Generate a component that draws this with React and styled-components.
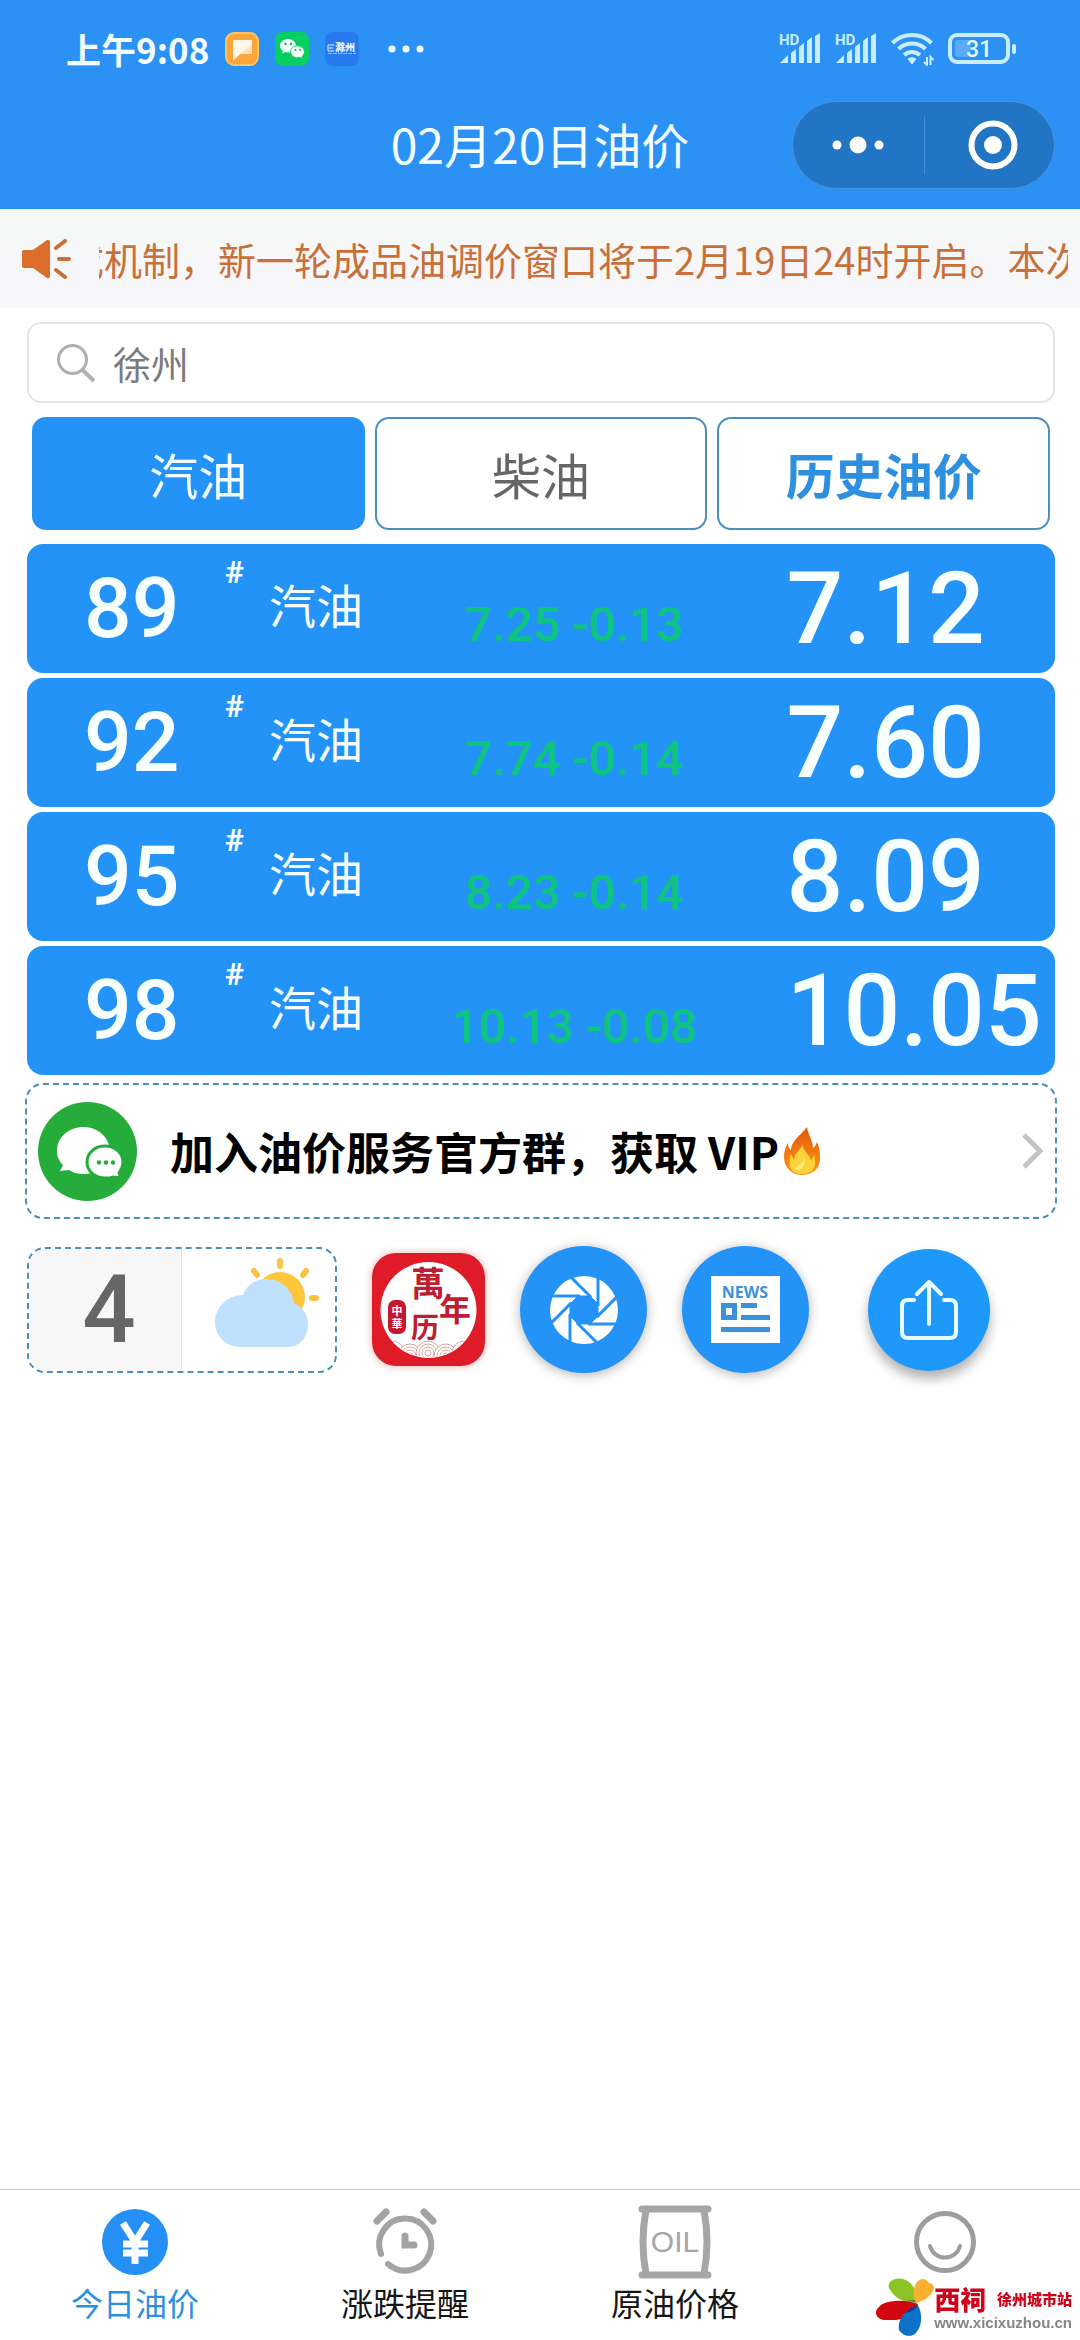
import React from "react";
import styled, { createGlobalStyle } from "styled-components";

const GlobalStyle = createGlobalStyle`
  * {
    box-sizing: border-box;
  }
  body {
    margin: 0;
    background: #fff;
    font-family: "Noto Sans CJK SC", "Noto Sans", sans-serif;
  }
  button, input {
    font-family: inherit;
  }
  a {
    color: inherit;
    text-decoration: none;
  }
  svg {
    display: block;
    flex-shrink: 0;
  }
`;

const blue = "#2393f8";
const digits = `Roboto, "Liberation Sans", sans-serif`;

const Page = styled.div`
  min-height: 100vh;
  display: flex;
  flex-direction: column;
`;

const Header = styled.header`
  background: #2b91f5;
  color: #f4ffff;
  padding-bottom: 17px;
`;

const StatusBar = styled.div`
  height: 98px;
  padding: 0 64px 0 66px;
  display: flex;
  align-items: center;
  justify-content: space-between;
`;

const StatusGroup = styled.div`
  display: flex;
  align-items: center;
  gap: ${({ $gap }) => $gap}px;
`;

const Clock = styled.span`
  font-size: 35px;
  line-height: 40px;
  font-weight: 700;
`;

const TitleBar = styled.div`
  height: 94px;
  padding: 0 25px;
  display: grid;
  grid-template-columns: 1fr auto 1fr;
  align-items: center;
`;

const Title = styled.h1`
  grid-column: 2;
  margin: 0;
  padding-bottom: 4px;
  font-size: 48px;
  line-height: 64px;
  font-weight: 400;
`;

const Capsule = styled.div`
  justify-self: end;
  width: 263px;
  height: 88px;
  display: grid;
  grid-template-columns: 1fr 1fr;
  align-items: center;
  background: #2274c4;
  border: 1px solid #4a93dc;
  border-radius: 44px;
`;

const CapsuleButton = styled.button`
  height: 58px;
  padding: 0;
  display: flex;
  align-items: center;
  justify-content: center;
  background: none;
  border: 0;
  & + & {
    padding-left: 8px;
    border-left: 1px solid #4a8dd0;
  }
`;

const Notice = styled.div`
  height: 99px;
  padding: 0 12px 0 22px;
  display: flex;
  align-items: center;
  gap: 27px;
  background: linear-gradient(#f5f9f5, #f7f6f9 60%);
`;

const NoticeText = styled.p`
  flex: 1;
  min-width: 0;
  margin: 0;
  overflow: hidden;
  white-space: nowrap;
  text-indent: -33px;
  font-size: 38px;
  line-height: 56px;
  color: #c8703a;
`;

const Main = styled.main`
  padding: 14px 25px 40px 27px;
`;

const SearchBox = styled.label`
  height: 81px;
  padding: 0 28px;
  display: flex;
  align-items: center;
  gap: 18px;
  border: 2px solid #e5e5e7;
  border-radius: 14px;
`;

const SearchInput = styled.input`
  flex: 1;
  min-width: 0;
  padding: 0;
  border: 0;
  outline: 0;
  background: none;
  font-size: 38px;
  line-height: 56px;
  color: #7c7c7e;
`;

const Tabs = styled.div`
  margin: 14px 5px;
  display: grid;
  grid-template-columns: repeat(3, 1fr);
  gap: 10px;
`;

const Tab = styled.button`
  height: 113px;
  padding: 0;
  font-size: 49px;
  line-height: 64px;
  font-weight: ${({ $strong }) => ($strong ? 700 : 400)};
  color: ${({ $active, $strong }) =>
    $active ? "#f4ffff" : $strong ? "#2d8fe0" : "#666"};
  background: ${({ $active }) => ($active ? blue : "#fff")};
  border: 2px solid ${({ $active }) => ($active ? blue : "#4a8fc0")};
  border-radius: 14px;
`;

const PriceTable = styled.table`
  display: block;
`;

const PriceBody = styled.tbody`
  display: flex;
  flex-direction: column;
  gap: 5px;
`;

const PriceRow = styled.tr`
  height: 129px;
  padding-left: 57px;
  display: grid;
  grid-template-columns: 141px 44px 93px 424fr 268fr;
  align-items: center;
  background: ${blue};
  color: #f8ffff;
  border-radius: 16px;
`;

const Cell = styled.td`
  padding: 0;
  white-space: nowrap;
`;

const Grade = styled(Cell)`
  font-family: ${digits};
  font-size: 84px;
  line-height: 88px;
  font-weight: 500;
`;

const Hash = styled(Cell)`
  align-self: start;
  padding-top: 12px;
  font-family: ${digits};
  font-size: 32px;
  line-height: 32px;
  font-weight: 700;
`;

const FuelName = styled(Cell)`
  padding-bottom: 10px;
  font-size: 47px;
  line-height: 64px;
`;

const Change = styled(Cell)`
  align-self: end;
  padding-bottom: 16px;
  text-align: center;
  font-family: ${digits};
  font-size: 48px;
  line-height: 64px;
  font-weight: 500;
  color: #0cc47e;
`;

const Price = styled(Cell)`
  font-family: ${digits};
  font-size: 100px;
  line-height: 104px;
  font-weight: 500;
`;

const VipLink = styled.a`
  height: 136px;
  margin: 8px -2px 27px;
  padding: 0 11px;
  display: flex;
  align-items: center;
  border: 2px dashed #4a8fbd;
  border-radius: 18px;
`;

const VipText = styled.span`
  flex: 1;
  margin-left: 33px;
  display: flex;
  align-items: center;
  gap: 4px;
  font-size: 44px;
  line-height: 64px;
  font-weight: 700;
  color: #000;
`;

const Tools = styled.div`
  display: flex;
  align-items: center;
  gap: 35px;
`;

const WeatherCard = styled.a`
  width: 310px;
  height: 126px;
  display: grid;
  grid-template-columns: 1fr 1fr;
  overflow: hidden;
  border: 2px dashed #4a8fbd;
  border-radius: 18px;
`;

const Temperature = styled.span`
  padding-left: 8px;
  display: flex;
  align-items: center;
  justify-content: center;
  background: #f7f7f7;
  border-right: 1px solid #e2e2e4;
  font-family: ${digits};
  font-size: 94px;
  font-weight: 500;
  color: #666;
`;

const WeatherIcon = styled.span`
  padding: 0 0 16px 16px;
  display: flex;
  align-items: center;
  justify-content: center;
`;

const CalendarButton = styled.button`
  padding: 0;
  background: none;
  border: 0;
  border-radius: 24px;
  box-shadow: 0 0 6px 2px rgba(190, 60, 60, 0.25);
`;

const RoundButton = styled.button`
  width: ${({ $size }) => $size}px;
  height: ${({ $size }) => $size}px;
  padding: 0;
  display: flex;
  align-items: center;
  justify-content: center;
  border: 0;
  border-radius: 50%;
  background: ${blue};
  box-shadow: 0 2px 12px rgba(0, 0, 0, 0.3);
`;

const ShareButton = styled(RoundButton)`
  margin-left: 24px;
  background: #1f98fc;
  box-shadow: 0 8px 12px rgba(0, 0, 0, 0.3);
`;

const TabBar = styled.nav`
  margin-top: auto;
  padding: 15px 0 13px;
  display: grid;
  grid-template-columns: repeat(4, 1fr);
  border-top: 1px solid #c9c9c9;
`;

const TabItem = styled.a`
  height: 122px;
  display: flex;
  flex-direction: column;
  align-items: center;
  font-size: 32px;
  line-height: 46px;
  color: ${({ $active }) => ($active ? "#2d8fe0" : "#151515")};
`;

/* site badge floats over the last tab */
const SiteBadge = styled.div`
  position: fixed;
  right: 8px;
  bottom: 4px;
  display: flex;
  align-items: center;
`;

const SiteText = styled.div`
  display: flex;
  flex-direction: column;
  padding-top: 4px;
`;

const SiteName = styled.div`
  display: flex;
  align-items: center;
  justify-content: space-between;
  font-size: 15px;
  line-height: 28px;
  font-weight: 900;
  color: #d0021b;
`;

const SiteBrand = styled.span`
  font-size: 26px;
`;

const SiteUrl = styled.div`
  font-family: "Liberation Sans", sans-serif;
  font-size: 15px;
  line-height: 20px;
  font-weight: 700;
  color: #858585;
`;

const NoteIcon = () => (
  <svg width="34" height="34" viewBox="0 0 34 34">
    <rect width="34" height="34" rx="9" fill="#ffc266" />
    <rect x="2" y="2" width="30" height="30" rx="7" fill="#fca63a" />
    <path d="M8 8h19v14H15l-7 7z" fill="#fff7ea" />
    <path d="M27 12v10H15z" fill="#fde3bd" />
  </svg>
);

const WeChatIcon = () => (
  <svg width="34" height="34" viewBox="0 0 34 34">
    <rect width="34" height="34" rx="8" fill="#06cf62" />
    <path
      d="M13 7c-4.500 0-8 3-8 6.800 0 2.200 1.100 4 3 5.200l-.8 2.600 3-1.500c1 .3 2 .4 3 .4 4.300 0 7.800-3 7.800-6.700S17.500 7 13 7z"
      fill="#f4fff8"
    />
    <path
      d="M22.500 13.800c-4 0-7 2.700-7 6s3 6 7 6c.9 0 1.700-.1 2.500-.3l2.600 1.300-.7-2.200c1.600-1.200 2.500-2.900 2.500-4.800 0-3.300-3-6-6.900-6z"
      fill="#f4fff8"
      stroke="#06cf62"
    />
    <g fill="#06b858">
      <circle cx="10.500" cy="12" r="1.200" />
      <circle cx="16" cy="12" r="1.200" />
      <circle cx="20.500" cy="18" r="1" />
      <circle cx="25" cy="18" r="1" />
    </g>
  </svg>
);

const CityIcon = () => (
  <svg width="34" height="34" viewBox="0 0 34 34">
    <rect width="34" height="34" rx="8" fill="#2878ee" />
    <path d="M9 13H3v6h6M4 16h4" stroke="#e6f4ff" fill="none" />
    <text x="10" y="19" fontSize="10" fontWeight="900" fill="#e6f4ff">
      滁州
    </text>
    <path d="M3 21.500h28" stroke="#8fc0fb" strokeDasharray="4 1" />
  </svg>
);

const MoreDots = () => (
  <svg width="50" height="34" viewBox="0 0 50 34" fill="#f4ffff">
    <circle cx="17" cy="17" r="3.500" />
    <circle cx="31" cy="17" r="3.500" />
    <circle cx="45" cy="17" r="3.500" />
  </svg>
);

const SignalIcon = () => (
  <svg width="42" height="34" viewBox="0 0 42 34" fill="#c9edff">
    <text x="0" y="13" fontFamily="Roboto" fontSize="15" fontWeight="700">
      HD
    </text>
    <path d="M1 31l8-8v8zM12 21l5-4v14h-5zM20 15l5-4v20h-5zM28 9l5-4v26h-5zM36 4l5-3v30h-5z" />
  </svg>
);

const WifiIcon = () => (
  <svg width="43" height="34" viewBox="0 0 43 34" fill="none" stroke="#c9edff">
    <g strokeWidth="4">
      <path d="M1.500 11a28 28 0 0 1 39 0" />
      <path d="M7.500 17a19.500 19.500 0 0 1 27 0" />
      <path d="M13 23a12 12 0 0 1 16 0" />
    </g>
    <path d="M17 27q4-3 8 0l-4 5z" fill="#c9edff" />
    <path d="M36 25v8l-3-3M39.500 33v-8l3 3" strokeWidth="2" />
  </svg>
);

const BatteryIcon = () => (
  <svg width="68" height="32" viewBox="0 0 68 32">
    <rect x="2" y="2" width="58" height="27" rx="7" fill="none" stroke="#c9edff" strokeWidth="4" />
    <rect x="7" y="7" width="16" height="17" rx="3" fill="#59abfa" />
    <rect x="64" y="11" width="4" height="10" rx="2" fill="#c9edff" />
    <text x="31" y="24" textAnchor="middle" fontFamily="Roboto" fontSize="23" fontWeight="500" fill="#e6fbff">
      31
    </text>
  </svg>
);

const SpeakerIcon = () => (
  <svg width="50" height="40" viewBox="0 0 50 40">
    <path d="M2 11h9L25 1q3-1 3 2v34q0 3-3 2L11 29H2q-2 0-2-2V13q0-2 2-2z" fill="#db6e2b" />
    <path d="M34 9l9-7M37 20h10M34 31l9 7" stroke="#c9703c" strokeWidth="4" strokeLinecap="round" />
  </svg>
);

const SearchIcon = () => (
  <svg width="38" height="40" viewBox="0 0 38 40" fill="none" stroke="#b0b0b0" strokeWidth="3">
    <circle cx="15.500" cy="16.500" r="14" />
    <path d="M25.500 27l11.500 11" strokeWidth="4" />
  </svg>
);

const GroupChatIcon = () => (
  <svg width="99" height="99" viewBox="0 0 99 99">
    <circle cx="49.500" cy="49.500" r="49.500" fill="#26ac3b" />
    <path
      d="M46 25c-15 0-27 10-27 24 0 6 2 10 6 14l-3 6 9-1c5 3 9 4 15 4 14 0 26-10 26-23S60 25 46 25z"
      fill="#fff"
    />
    <path
      d="M67 44c-10 0-18 7-18 16s8 16 18 16c3 0 6 0 8-1l8 1-2-5c2-3 4-7 4-11 0-9-8-16-18-16z"
      fill="#fff"
      stroke="#26ac3b"
      strokeWidth="3"
    />
    <g fill="#26ac3b">
      <circle cx="61" cy="60.500" r="2.200" />
      <circle cx="68" cy="60.500" r="2.200" />
      <circle cx="75" cy="60.500" r="2.200" />
    </g>
  </svg>
);

const FireIcon = () => (
  <svg width="38" height="50" viewBox="0 0 38 50">
    <defs>
      <linearGradient id="fire" x1="0" y1="0" x2="0" y2="1">
        <stop offset="0" stopColor="#e4570c" />
        <stop offset="1" stopColor="#fb9a14" />
      </linearGradient>
    </defs>
    <path
      d="M24 1c1 8 6 13 6 21 2-1 3-3 4-6 3 6 3 12 3 17 0 10-8 16-18 16S1 42 1 31c0-5 1-9 4-14 0 4 1 6 3 7 0-9 9-14 16-23z"
      fill="url(#fire)"
    />
    <path
      d="M20 18c-1 7 7 10 8 17l3-6c3 9 1 19-12 19S5 38 8 28l3 6c0-7 6-9 9-16z"
      fill="#fdd33c"
    />
    <path d="M20 30c2 8-6 8-8 13 6 3 13-4 8-13z" fill="#feea74" />
  </svg>
);

const ChevronIcon = () => (
  <svg width="22" height="36" viewBox="0 0 22 36" fill="none" stroke="#c4c4c4" strokeWidth="5">
    <path d="M2 2l16 16L2 34" />
  </svg>
);

const CloudSunIcon = () => (
  <svg width="104" height="90" viewBox="0 0 104 90">
    <g stroke="#fac348" strokeWidth="6" strokeLinecap="round">
      <path d="M65 4v5M39 14l3 4M91 14l-3 4M97 41h4" />
    </g>
    <circle cx="65" cy="40" r="25" fill="#fdc63d" />
    <path
      d="M26 90C10 90 0 79 0 65s12-27 28-27c4-10 12-16 23-16 15 0 25 9 28 24 8 4 14 11 14 21 0 12-7 23-20 23z"
      fill="#bfe1fe"
    />
  </svg>
);

const CalendarIcon = () => (
  <svg width="113" height="113" viewBox="0 0 113 113" fontWeight="700" textAnchor="middle">
    <defs>
      <clipPath id="disc">
        <circle cx="56.500" cy="57" r="47" />
      </clipPath>
    </defs>
    <rect width="113" height="113" rx="24" fill="#df1b28" />
    <circle cx="56.500" cy="57" r="48" fill="#fff" />
    <g clipPath="url(#disc)" fill="#fff" stroke="#d9a09f">
      {[20, 38, 56, 74, 92].map((x, i) => (
        <g key={x}>
          <circle cx={x} cy={i % 2 ? 103 : 100} r="12" />
          <circle cx={x} cy={i % 2 ? 103 : 100} r="9" />
          <circle cx={x} cy={i % 2 ? 103 : 100} r="6" />
          <circle cx={x} cy={i % 2 ? 103 : 100} r="3" />
        </g>
      ))}
    </g>
    <g fill="#bd1e33">
      <text x="56" y="43" fontSize="34">萬</text>
      <text x="83" y="68" fontSize="32">年</text>
      <text x="53" y="85" fontSize="28">历</text>
    </g>
    <rect x="16" y="47" width="18" height="34" rx="7" fill="#c4192c" />
    <g fill="#fff" fontSize="11">
      <text x="25" y="62">中</text>
      <text x="25" y="75">華</text>
    </g>
  </svg>
);

const ApertureIcon = () => (
  <svg width="68" height="68" viewBox="-34 -34 68 68">
    <circle r="34" fill="#fff" />
    <path
      d="M14 -6L6 -14L-6 -14L-14 -6L-14 6L-6 14L6 14L14 6Z"
      fill={blue}
      stroke={blue}
    />
    {[0, 45, 90, 135, 180, 225, 270, 315].map((angle) => (
      <path key={angle} d="M14 -4V-35" stroke={blue} strokeWidth="3" transform={`rotate(${angle})`} />
    ))}
  </svg>
);

const NewsIcon = () => (
  <svg width="69" height="67" viewBox="0 0 69 67">
    <rect width="69" height="67" fill="#fff" />
    <text x="34" y="22" textAnchor="middle" fontFamily="Noto Sans" fontSize="16" fontWeight="700" fill="#3a92dc">
      NEWS
    </text>
    <path d="M12.500 29.500h11v12h-11z" fill="#fff" stroke="#3a92dc" strokeWidth="5" />
    <path d="M30 29.500h16M30 41.500h29M10 53.500h49" stroke="#3a92dc" strokeWidth="5" />
  </svg>
);

const ShareIcon = () => (
  <svg width="58" height="62" viewBox="0 0 58 62" fill="none" stroke="#e9fdff" strokeWidth="4">
    <path d="M14 21H8q-6 0-6 6v26q0 6 6 6h42q6 0 6-6V27q0-6-6-6h-6" strokeLinecap="round" />
    <path d="M29 45V3M17 15L29 3l12 12" strokeLinecap="round" strokeLinejoin="round" />
  </svg>
);

const YuanIcon = () => (
  <svg width="74" height="74" viewBox="0 0 74 74">
    <circle cx="37" cy="37" r="33" fill="#2490f6" />
    <path
      d="M25 18l12 19 12-19M25 39h25M25 48h25M37 35v24"
      fill="none"
      stroke="#fff"
      strokeWidth="7"
    />
  </svg>
);

const AlarmIcon = () => (
  <svg width="74" height="74" viewBox="0 0 74 74" fill="none" stroke="#a3a3a3" strokeLinecap="round">
    <path d="M13 49a26 26 0 1 1 7 10" strokeWidth="6" />
    <path d="M9 16l9-9M56 7l9 9" strokeWidth="7" />
    <path d="M37 31v9h9" strokeWidth="7" />
  </svg>
);

const OilIcon = () => (
  <svg width="74" height="74" viewBox="0 0 74 74" fill="none" stroke="#a6a6a6" strokeLinecap="round">
    <path d="M4 4h66M4 70h66" strokeWidth="7" />
    <path d="M8 5q-6 32 0 64M66 5q6 32 0 64" strokeWidth="7" />
    <text x="37" y="47" textAnchor="middle" fontFamily="Liberation Sans" fontSize="30" fill="#a6a6a6" stroke="none">
      OIL
    </text>
  </svg>
);

const SmileIcon = () => (
  <svg width="74" height="74" viewBox="0 0 74 74" fill="none" stroke="#9d9d9d" strokeLinecap="round">
    <circle cx="37" cy="37" r="28.500" strokeWidth="5" />
    <path d="M22 41a15.500 15.500 0 0 0 30 0" strokeWidth="4" />
  </svg>
);

const FlowerLogo = () => (
  <svg width="58" height="58" viewBox="0 0 58 58">
    <path d="M14 4c6-5 14-4 19 0 7 6 8 12 6 20-8 1-19-2-24-11-3-3-3-6-1-9z" fill="#8cc425" />
    <path d="M41 4c4-4 9-4 12 1 6 1 6 6 3 10-4 5-9 8-16 10-4-8-3-15 1-21z" fill="#fbb032" />
    <path d="M3 29c3-6 24-9 39-3-5 12-15 17-31 16-9 1-15-7-8-13z" fill="#d2060f" />
    <path d="M42 27c5 10 4 22-3 29-6 4-13 1-16-4-2-10 6-21 19-25z" fill="#0b72c8" />
    <path d="M42 27c-5 1-9 4-13 8 7-1 11-4 13-8z" fill="#27348b" />
    <path d="M25 23c5-1 10-1 15 2l-1-3q-8 0-14 1z" fill="#3e8a2b" />
  </svg>
);

const prices = [
  { grade: "89", change: "7.25 -0.13", price: "7.12" },
  { grade: "92", change: "7.74 -0.14", price: "7.60" },
  { grade: "95", change: "8.23 -0.14", price: "8.09" },
  { grade: "98", change: "10.13 -0.08", price: "10.05" },
];

const App = () => {
  const [tab, setTab] = React.useState("gasoline");
  return (
    <Page>
      <GlobalStyle />
      <Header>
        <StatusBar>
          <StatusGroup $gap={16}>
            <Clock>上午9:08</Clock>
            <NoteIcon />
            <WeChatIcon />
            <CityIcon />
            <MoreDots />
          </StatusGroup>
          <StatusGroup $gap={14}>
            <SignalIcon />
            <SignalIcon />
            <WifiIcon />
            <BatteryIcon />
          </StatusGroup>
        </StatusBar>
        <TitleBar>
          <Title>02月20日油价</Title>
          <Capsule>
            <CapsuleButton aria-label="更多">
              <svg width="52" height="18" viewBox="0 0 52 18" fill="#fff">
                <circle cx="5" cy="9" r="4.500" />
                <circle cx="26" cy="9" r="8.500" />
                <circle cx="47" cy="9" r="4.500" />
              </svg>
            </CapsuleButton>
            <CapsuleButton aria-label="关闭">
              <svg width="50" height="50" viewBox="0 0 50 50">
                <circle cx="25" cy="25" r="21.500" fill="none" stroke="#fff" strokeWidth="6" />
                <circle cx="25" cy="25" r="9" fill="#fff" />
              </svg>
            </CapsuleButton>
          </Capsule>
        </TitleBar>
      </Header>

      <Notice>
        <SpeakerIcon />
        <NoticeText>成机制，新一轮成品油调价窗口将于2月19日24时开启。本次</NoticeText>
      </Notice>

      <Main>
        <SearchBox>
          <SearchIcon />
          <SearchInput type="text" aria-label="城市" defaultValue="徐州" />
        </SearchBox>

        <Tabs>
          <Tab $active={tab === "gasoline"} onClick={() => setTab("gasoline")}>
            汽油
          </Tab>
          <Tab $active={tab === "diesel"} onClick={() => setTab("diesel")}>
            柴油
          </Tab>
          <Tab $strong>历史油价</Tab>
        </Tabs>

        <PriceTable>
          <PriceBody>
            {prices.map((item) => (
              <PriceRow key={item.grade}>
                <Grade>{item.grade}</Grade>
                <Hash>#</Hash>
                <FuelName>汽油</FuelName>
                <Change>{item.change}</Change>
                <Price>{item.price}</Price>
              </PriceRow>
            ))}
          </PriceBody>
        </PriceTable>

        <VipLink href="#vip">
          <GroupChatIcon />
          <VipText>
            加入油价服务官方群，获取 VIP
            <FireIcon />
          </VipText>
          <ChevronIcon />
        </VipLink>

        <Tools>
          <WeatherCard href="#weather">
            <Temperature>4</Temperature>
            <WeatherIcon>
              <CloudSunIcon />
            </WeatherIcon>
          </WeatherCard>
          <CalendarButton aria-label="万年历">
            <CalendarIcon />
          </CalendarButton>
          <RoundButton $size={127} aria-label="拍照">
            <ApertureIcon />
          </RoundButton>
          <RoundButton $size={127} aria-label="新闻">
            <NewsIcon />
          </RoundButton>
          <ShareButton $size={122} aria-label="分享">
            <ShareIcon />
          </ShareButton>
        </Tools>
      </Main>

      <TabBar>
        <TabItem href="#today" $active>
          <YuanIcon />
          今日油价
        </TabItem>
        <TabItem href="#remind">
          <AlarmIcon />
          涨跌提醒
        </TabItem>
        <TabItem href="#crude">
          <OilIcon />
          原油价格
        </TabItem>
        <TabItem href="#me" aria-label="我的">
          <SmileIcon />
        </TabItem>
      </TabBar>

      <SiteBadge>
        <FlowerLogo />
        <SiteText>
          <SiteName>
            <SiteBrand>西祠</SiteBrand>徐州城市站
          </SiteName>
          <SiteUrl>www.xicixuzhou.cn</SiteUrl>
        </SiteText>
      </SiteBadge>
    </Page>
  );
};

export default App;
